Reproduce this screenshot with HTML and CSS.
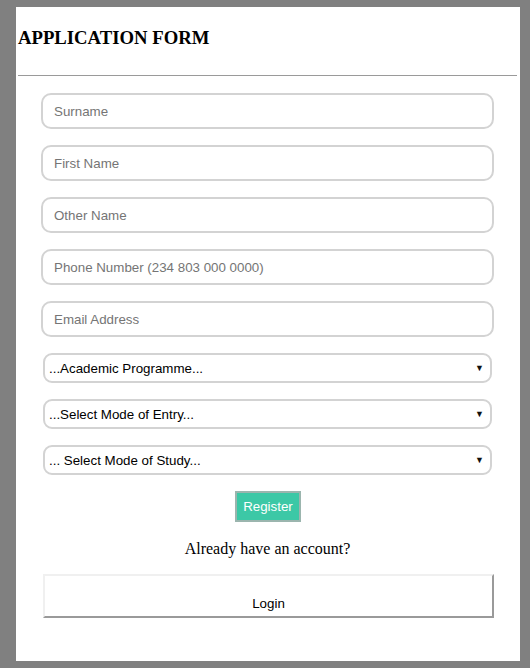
FILE: index.html
```
<!DOCTYPE html>
<html>
<head>
<meta charset="utf-8">
<link rel="stylesheet" href="styles.css">
</head>
<body>
<div class="panel">
  <h3 class="title">APPLICATION FORM</h3>
  <hr class="rule">
  <form class="form">
    <input class="field" type="text" placeholder="Surname">
    <input class="field" type="text" placeholder="First Name">
    <input class="field" type="text" placeholder="Other Name">
    <input class="field" type="text" placeholder="Phone Number (234 803 000 0000)">
    <input class="field" type="text" placeholder="Email Address">
    <div class="select"><span>...Academic Programme...</span><span class="arrow">&#9660;</span></div>
    <div class="select"><span>...Select Mode of Entry...</span><span class="arrow">&#9660;</span></div>
    <div class="select"><span>... Select Mode of Study...</span><span class="arrow">&#9660;</span></div>
    <div class="center"><button type="button" class="register">Register</button></div>
    <p class="already">Already have an account?</p>
    <button type="button" class="login">Login</button>
  </form>
</div>
</body>
</html>
```
FILE: styles.css
```
html, body {
  margin: 0;
  padding: 0;
  background: #808080;
}
body {
  padding: 7px 10px 7px 16px;
}
.panel {
  background: #fff;
  width: 504px;
  height: 654px;
  box-sizing: border-box;
  padding-top: 1px;
}
.title {
  font-family: "Liberation Serif", "Times New Roman", serif;
  font-weight: bold;
  font-size: 18.72px;
  margin: 19px 0 0 2px;
  line-height: 22px;
  color: #000;
}
.rule {
  margin: 26px 3px 0 2px;
  border: 0;
  border-top: 1px solid #9a9a9a;
  height: 0;
}
.form {
  display: flex;
  flex-direction: column;
  padding: 17px 0 0 25px;
  width: 453px;
}
.field {
  display: block;
  width: 453px;
  height: 36px;
  box-sizing: border-box;
  border: 2px solid #d3d3d3;
  border-radius: 10px;
  padding: 0 11px;
  margin: 0 0 16px 0;
  font-family: "Liberation Sans", Arial, sans-serif;
  font-size: 13.33px;
  color: #333;
  background: #fff;
  outline: none;
}
.field::placeholder {
  color: #757575;
}
.select {
  display: flex;
  align-items: center;
  justify-content: space-between;
  width: 449px;
  margin-left: 2px;
  height: 30px;
  box-sizing: border-box;
  border: 2px solid #d3d3d3;
  border-radius: 9px;
  padding: 0 6px 0 4px;
  margin-bottom: 16px;
  font-family: "Liberation Sans", Arial, sans-serif;
  font-size: 13.33px;
  color: #000;
}
.arrow {
  font-size: 9px;
  color: #111;
}
.center {
  display: flex;
  justify-content: center;
}
.register {
  background: #3cc8a6;
  color: #fff;
  border: 2px solid #9bb5ae;
  font-family: "Liberation Sans", Arial, sans-serif;
  font-size: 13.33px;
  height: 31px;
  padding: 0 6px;
  margin: 0 0 0 1px;
}
.already {
  font-family: "Liberation Serif", "Times New Roman", serif;
  font-size: 16px;
  text-align: center;
  margin: 18px 0 16px 0;
  color: #000;
}
.login {
  width: 451px;
  margin-left: 2px;
  height: 44px;
  background: #fff;
  border: 2px solid;
  border-color: #f0f0f0 #9a9a9a #9a9a9a #f0f0f0;
  font-family: "Liberation Sans", Arial, sans-serif;
  font-size: 13.33px;
  color: #000;
  padding: 14px 0 0 0;
}
```
